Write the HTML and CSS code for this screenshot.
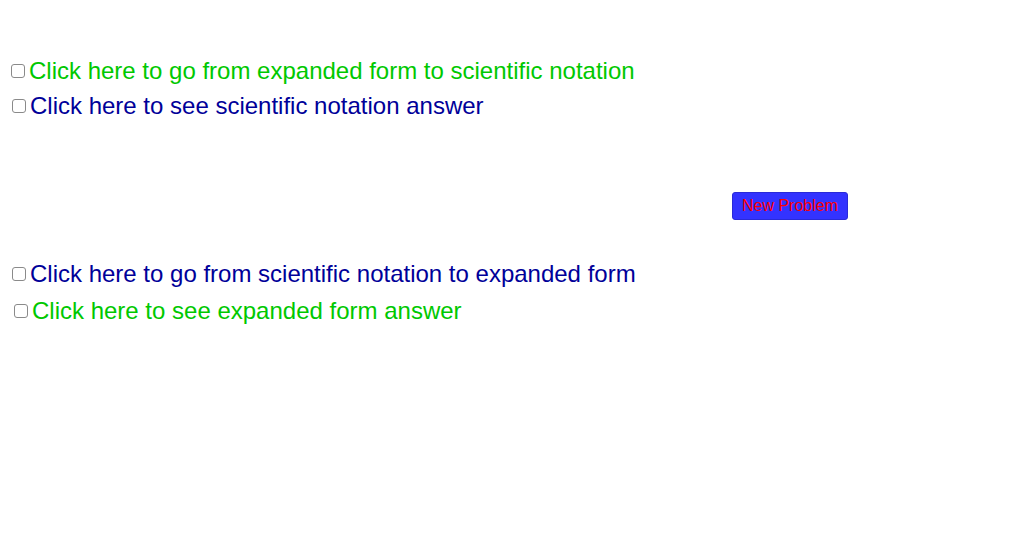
FILE: index.html
```html
<!DOCTYPE html>
<html lang="en">

<head>
    <meta charset="UTF-8">
    <meta name="viewport" content="width=device-width, initial-scale=1.0">
    <title>Scientific Notation</title>
    <link rel="stylesheet" href="styles.css">
</head>

<body>
    <div class="applet">
        <label class="check green" style="left: 11px; top: 57px;"><span class="box"></span>Click here to go from expanded form to scientific notation</label>
        <label class="check blue" style="left: 12px; top: 92px;"><span class="box"></span>Click here to see scientific notation answer</label>
        <button class="btn" style="left: 732px; top: 192px;">New Problem</button>
        <label class="check blue" style="left: 12px; top: 260px;"><span class="box"></span>Click here to go from scientific notation to expanded form</label>
        <label class="check green" style="left: 14px; top: 297px;"><span class="box"></span>Click here to see expanded form answer</label>
    </div>
</body>

</html>
```

FILE: styles.css
```css
* {
    box-sizing: border-box;
    margin: 0;
    padding: 0;
}

body {
    background: #fff;
    font-family: "Liberation Sans", Arial, sans-serif;
}

.applet {
    position: relative;
    width: 1024px;
    height: 558px;
    overflow: hidden;
}

.check {
    position: absolute;
    display: flex;
    align-items: center;
    gap: 4px;
    font-size: 24px;
    line-height: 28px;
    white-space: nowrap;
}

.green {
    color: #00c800;
}

.blue {
    color: #000099;
}

.box {
    width: 14px;
    height: 14px;
    border: 1px solid #8a8a8a;
    border-radius: 3px;
    background: #fff;
}

.btn {
    position: absolute;
    width: 116px;
    height: 28px;
    padding-bottom: 1px;
    background: #3333ff;
    color: #ff0000;
    border: 1px solid #2a2ad8;
    border-radius: 3px;
    font-family: "Liberation Sans", Arial, sans-serif;
    font-size: 16px;
}
```
